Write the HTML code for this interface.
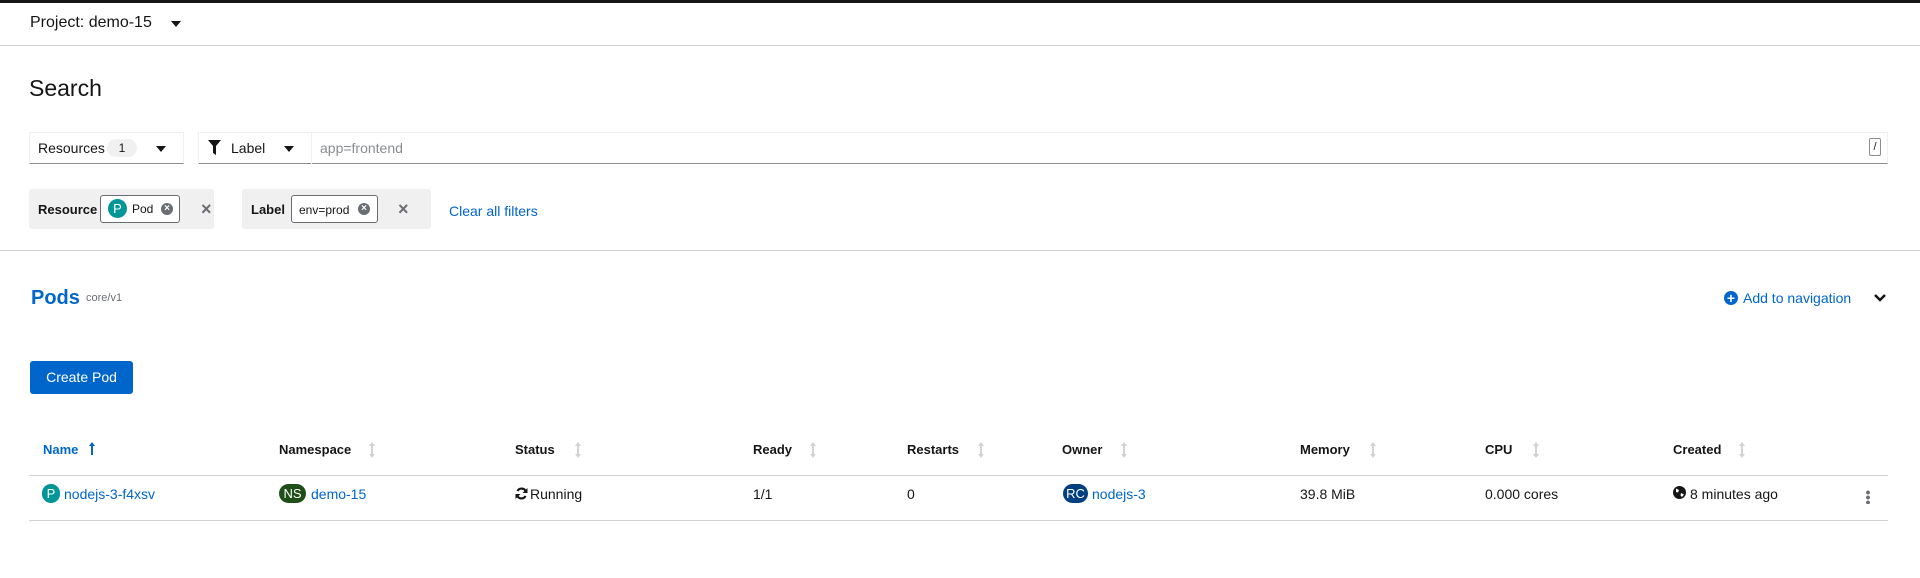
<!DOCTYPE html>
<html><head><meta charset="utf-8"><style>
*{box-sizing:border-box;margin:0;padding:0}
body{width:1920px;height:578px;background:#fff;font-family:"Liberation Sans",sans-serif;color:#151515;font-size:14px;position:relative;overflow:hidden}
.a{position:absolute;white-space:nowrap}
.blue{color:#0066cc}
.caret{width:0;height:0;border-left:5px solid transparent;border-right:5px solid transparent;border-top:6px solid #151515;position:absolute}
.b{font-weight:bold;font-size:13px}
.badge{position:absolute;border-radius:10px;color:#fff;font-size:13px;text-align:center;line-height:19px;height:19px}
.sort{position:absolute;width:2px;height:12px;background:#d2d2d2}
.sort:before,.sort:after{content:"";position:absolute;left:-2px;border-left:3px solid transparent;border-right:3px solid transparent}
.sort:before{top:-2px;border-bottom:4px solid #d2d2d2}
.sort:after{bottom:-2px;border-top:4px solid #d2d2d2}
.xc{position:absolute;width:12px;height:12px;border-radius:6px;background:#6a6e73;color:#fff;font-size:10px;line-height:12px;text-align:center;font-weight:bold}
</style></head><body>
<div class="a" style="left:0;top:0;width:1920px;height:3px;background:#151515"></div>
<div class="a" style="left:30px;top:14px;font-size:16px">Project: demo-15</div>
<div class="caret" style="left:171px;top:21px"></div>
<div class="a" style="left:0;top:45px;width:1920px;height:1px;background:#d2d2d2"></div>
<div class="a" style="left:29px;top:75px;font-size:23px">Search</div>

<div class="a" style="left:29px;top:132px;width:155px;height:32px;border:1px solid #f0f0f0;border-bottom:1px solid #8a8d90"></div>
<div class="a" style="left:38px;top:140px;font-size:14px">Resources</div>
<div class="a" style="left:107px;top:139px;width:30px;height:18px;border-radius:9px;background:#f0f0f0;font-size:12px;text-align:center;line-height:18px">1</div>
<div class="caret" style="left:156px;top:146px"></div>
<div class="a" style="left:198px;top:132px;width:1690px;height:32px;border:1px solid #f0f0f0;border-bottom:1px solid #8a8d90"></div>
<div class="a" style="left:311px;top:132px;width:1px;height:32px;background:#f0f0f0"></div>
<svg class="a" style="left:208px;top:140px" width="13" height="15" viewBox="0 0 13 15"><path d="M0 0H13L8 6V15L5 13V6Z" fill="#151515"/></svg>
<div class="a" style="left:231px;top:140px">Label</div>
<div class="caret" style="left:284px;top:146px"></div>
<div class="a" style="left:320px;top:140px;color:#8a8d90">app=frontend</div>
<div class="a" style="left:1869px;top:138px;width:12px;height:18px;border:1px solid #8a8d90;border-radius:2px;font-size:11px;text-align:center;line-height:16px">/</div>

<div class="a" style="left:29px;top:189px;width:185px;height:40px;background:#f0f0f0;border-radius:3px"></div>
<div class="a b" style="left:38px;top:202px">Resource</div>
<div class="a" style="left:100px;top:195px;width:80px;height:28px;background:#fff;border:1px solid #6a6e73;border-radius:3px"></div>
<div class="badge" style="left:108px;top:199px;width:19px;background:#009596">P</div>
<div class="a" style="left:132px;top:202px;font-size:12px">Pod</div>
<div class="xc" style="left:161px;top:203px">×</div>
<div class="a" style="left:201px;top:199px;font-size:18px;color:#6a6e73;font-weight:bold">×</div>
<div class="a" style="left:242px;top:189px;width:189px;height:40px;background:#f0f0f0;border-radius:3px"></div>
<div class="a b" style="left:251px;top:202px">Label</div>
<div class="a" style="left:291px;top:195px;width:87px;height:28px;background:#fff;border:1px solid #6a6e73;border-radius:3px"></div>
<div class="a" style="left:299px;top:203px;font-size:12px">env=prod</div>
<div class="xc" style="left:358px;top:203px">×</div>
<div class="a" style="left:398px;top:199px;font-size:18px;color:#6a6e73;font-weight:bold">×</div>
<div class="a blue" style="left:449px;top:203px;font-size:14px">Clear all filters</div>
<div class="a" style="left:0;top:250px;width:1920px;height:1px;background:#d2d2d2"></div>

<div class="a blue" style="left:31px;top:287px;font-size:20px;font-weight:bold">Pods</div>
<div class="a" style="left:86px;top:292px;font-size:11px;color:#6a6e73">core/v1</div>
<div class="a" style="left:1724px;top:291px;width:14px;height:14px;border-radius:7px;background:#0066cc;color:#fff;font-size:14px;font-weight:bold;text-align:center;line-height:14px">+</div>
<div class="a blue" style="left:1743px;top:290px;font-size:14px">Add to navigation</div>
<svg class="a" style="left:1874px;top:294px" width="12" height="9" viewBox="0 0 12 9"><path d="M1 1L6 6L11 1" stroke="#151515" stroke-width="2.5" fill="none"/></svg>

<div class="a" style="left:30px;top:361px;width:103px;height:33px;background:#0066cc;border-radius:3px;color:#fff;text-align:center;line-height:33px;font-size:14px">Create Pod</div>

<div class="a b blue" style="left:43px;top:442px">Name</div>
<svg class="a" style="left:89px;top:442px" width="6" height="13" viewBox="0 0 6 13"><path d="M3 0L6 4H4V13H2V4H0Z" fill="#0066cc"/></svg>
<div class="a b" style="left:279px;top:442px">Namespace</div><div class="sort" style="left:371px;top:444px"></div>
<div class="a b" style="left:515px;top:442px">Status</div><div class="sort" style="left:577px;top:444px"></div>
<div class="a b" style="left:753px;top:442px">Ready</div><div class="sort" style="left:812px;top:444px"></div>
<div class="a b" style="left:907px;top:442px">Restarts</div><div class="sort" style="left:980px;top:444px"></div>
<div class="a b" style="left:1062px;top:442px">Owner</div><div class="sort" style="left:1123px;top:444px"></div>
<div class="a b" style="left:1300px;top:442px">Memory</div><div class="sort" style="left:1372px;top:444px"></div>
<div class="a b" style="left:1485px;top:442px">CPU</div><div class="sort" style="left:1535px;top:444px"></div>
<div class="a b" style="left:1673px;top:442px">Created</div><div class="sort" style="left:1741px;top:444px"></div>
<div class="a" style="left:29px;top:475px;width:1859px;height:1px;background:#d2d2d2"></div>

<div class="badge" style="left:42px;top:484px;width:18px;background:#009596">P</div>
<div class="a blue" style="left:64px;top:486px">nodejs-3-f4xsv</div>
<div class="badge" style="left:279px;top:484px;width:27px;background:#1e4f18">NS</div>
<div class="a blue" style="left:311px;top:486px">demo-15</div>
<svg class="a" style="left:515px;top:487px" width="13" height="13" viewBox="0 0 13 13"><path d="M11 5A4.6 4.6 0 0 0 2.5 4M2 8A4.6 4.6 0 0 0 10.5 9" stroke="#151515" stroke-width="2.2" fill="none"/><path d="M12.5 1V6H7.5Z M0.5 12V7H5.5Z" fill="#151515"/></svg>
<div class="a" style="left:530px;top:486px">Running</div>
<div class="a" style="left:753px;top:486px">1/1</div>
<div class="a" style="left:907px;top:486px">0</div>
<div class="badge" style="left:1063px;top:484px;width:25px;background:#004080">RC</div>
<div class="a blue" style="left:1092px;top:486px">nodejs-3</div>
<div class="a" style="left:1300px;top:486px">39.8 MiB</div>
<div class="a" style="left:1485px;top:486px">0.000 cores</div>
<svg class="a" style="left:1673px;top:486px" width="13" height="13" viewBox="0 0 13 13"><circle cx="6.5" cy="6.5" r="6.5" fill="#151515"/><path d="M3 2.5L6 4L5 6.5L3 6Z M8 7L11 8.5L9 11L7.5 9.5Z" fill="#fff"/></svg>
<div class="a" style="left:1690px;top:486px">8 minutes ago</div>
<div class="a" style="left:1866px;top:490px;width:4px;height:14px;background:radial-gradient(circle,#6a6e73 1.8px,transparent 2px) 0 0/4px 5px"></div>
<div class="a" style="left:29px;top:520px;width:1859px;height:1px;background:#d2d2d2"></div>
</body></html>
